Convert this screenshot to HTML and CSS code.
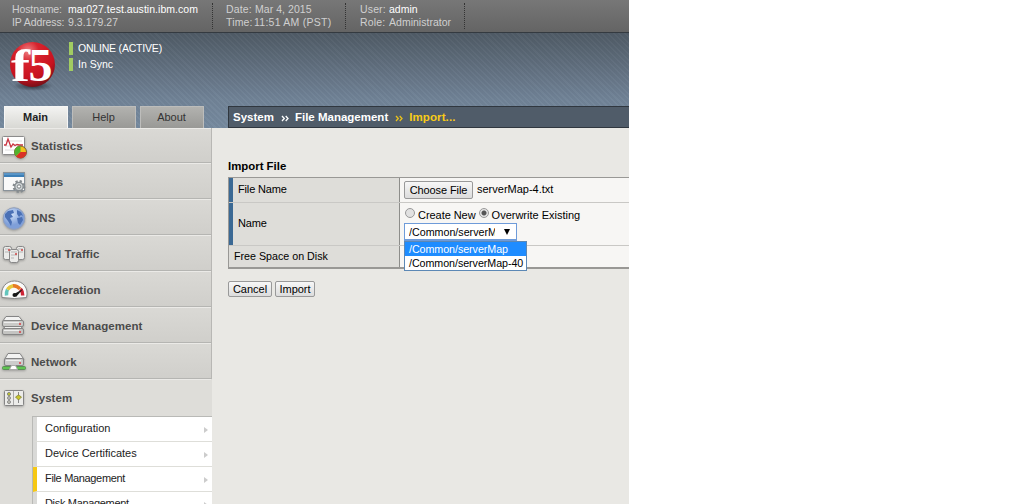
FILE: index.html
```html
<!DOCTYPE html>
<html lang="en">
<head>
<meta charset="utf-8">
<title>System - File Management - Import</title>
<link rel="stylesheet" href="styles.css">
</head>
<body>
<div class="app">
  <header class="status-bar">
    <dl class="info host"><dt>Hostname:</dt><dd class="bright hostname">mar027.test.austin.ibm.com</dd><dt class="ip">IP Address:</dt><dd class="ipval">9.3.179.27</dd></dl>
    <dl class="info date"><dt>Date:</dt><dd>Mar 4, 2015</dd><dt>Time:</dt><dd class="clock">11:51 AM (PST)</dd></dl>
    <dl class="info user"><dt>User:</dt><dd class="bright">admin</dd><dt>Role:</dt><dd>Administrator</dd></dl>
  </header>
  <div class="banner">
    <div class="brand">
      <svg class="logo" width="50" height="54" viewBox="0 0 50 54">
        <defs>
          <radialGradient id="ball" cx=".4" cy=".2" r=".8"><stop offset="0" stop-color="#ee8386"/><stop offset=".3" stop-color="#d8232d"/><stop offset=".75" stop-color="#c8121f"/><stop offset="1" stop-color="#7c1018"/></radialGradient>
          <radialGradient id="shade"><stop offset="0" stop-color="#252c34" stop-opacity=".9"/><stop offset="1" stop-color="#252c34" stop-opacity="0"/></radialGradient>
        </defs>
        <ellipse cx="25" cy="46" rx="20" ry="5" fill="url(#shade)"/>
        <circle cx="24.500" cy="24.500" r="22.500" fill="url(#ball)"/>
        <text class="logo-f" x="3" y="40.500" textLength="19" lengthAdjust="spacingAndGlyphs">f</text><text class="logo-5" x="20.500" y="40.500" textLength="24" lengthAdjust="spacingAndGlyphs">5</text>
      </svg>
      <div class="states"><p class="online">ONLINE (ACTIVE)</p><p class="sync">In Sync</p></div>
    </div>
    <div class="tab-row">
      <nav class="tabs"><a class="tab active">Main</a><a class="tab">Help</a><a class="tab">About</a></nav>
      <div class="crumbs"><b>System</b><svg class="chev" width="8" height="7" viewBox="0 0 8 7"><path d="M1 1l2.300 2.500L1 6M4.700 1L7 3.500 4.700 6"/></svg><b class="crumb-files">File Management</b><svg class="chev gold" width="8" height="7" viewBox="0 0 8 7"><path d="M1 1l2.300 2.500L1 6M4.700 1L7 3.500 4.700 6"/></svg><b class="current">Import...</b></div>
    </div>
  </div>
  <div class="body">
    <aside class="sidebar">
      <a class="item first"><svg class="icon" viewBox="0 0 28 28"><rect x="2.500" y="4.500" width="22" height="18" rx="1" fill="#fff" stroke="#8c8c8c"/><path d="M5 9h17M5 14h17M5 18h12" stroke="#ddd"/><path d="M4 13h2l2-6 3 8 2-3 2 1.500 2-1 2 .5h4" fill="none" stroke="#c93440" stroke-width="1.300"/><circle cx="20.500" cy="20" r="6" fill="#f2c319" stroke="#745c31"/><path d="M20.500 20v-6a6 6 0 0 0-4.500 10z" fill="#51b22e"/><path d="M20.500 20l-4.500 4.200a6 6 0 0 0 10.400-4.200z" fill="#d93127"/></svg>Statistics</a>
      <a class="item"><svg class="icon" viewBox="0 0 28 28"><rect x="3.500" y="4.500" width="21" height="18" fill="#f9f9f9" stroke="#89929a"/><path d="M4 5h20v4H4z" fill="#3c7fb7"/><path d="M4 6h20" stroke="#76acd6"/><circle cx="19" cy="18.500" r="5.200" fill="none" stroke="#858b8f" stroke-width="2.500" stroke-dasharray="2.200 1.884"/><circle cx="19" cy="18.500" r="4.200" fill="#cdd2d4" stroke="#858b8f" stroke-width="1.300"/><circle cx="19" cy="18.500" r="1.700" fill="#fff" stroke="#797f82"/></svg>iApps</a>
      <a class="item"><svg class="icon" viewBox="0 0 28 28"><defs><radialGradient id="globe" cx=".4" cy=".3"><stop stop-color="#cfe0f8"/><stop offset="1" stop-color="#7f9fd8"/></radialGradient></defs><circle cx="14" cy="14.500" r="10.800" fill="url(#globe)" stroke="#93a0ba"/><path d="M5 10l3-3 5-1 1 3-3 1 2 3-3 1 2 4-1 4-3-5-3-4zM17 6l4 2 2 4-2-1-2 2-2-3zM17 14l5-1 1 3-3 5-2-2z" fill="#4a70b5"/></svg>DNS</a>
      <a class="item"><svg class="icon" viewBox="0 0 28 28"><g fill="#ebebe9" stroke="#888"><rect x="3.500" y="6.500" width="8" height="13" rx="2"/><rect x="16.500" y="6.500" width="8" height="13" rx="2"/><rect x="9.500" y="9.500" width="9" height="13" rx="2"/></g><path d="M5 9h5M5 12h4M18 9h5M19 12h4M11 12h6M11 15h6M11 18h3" stroke="#b5b5b5"/><path d="M8 10h2M15 14h2M21 10h2" stroke="#ce4343" stroke-width="1.300"/></svg>Local Traffic</a>
      <a class="item"><svg class="icon" viewBox="0 0 28 28"><path d="M2 21.500C0 12 6 5 14.500 5S29 12 26.500 21.500q-12 2-24.500 0z" fill="#fafafa" stroke="#858585"/><path d="M6.500 19.500q-.4-3.500 1-6" fill="none" stroke="#62c5bd" stroke-width="3.500"/><path d="M7.500 13.500q2-3 6-3.800" fill="none" stroke="#e6c73b" stroke-width="3.500"/><path d="M13 9.700q4-.3 7 3.300" fill="none" stroke="#e77a25" stroke-width="3.500"/><path d="M20.500 13q2.200 2.500 2.200 6.500" fill="none" stroke="#cd2335" stroke-width="3.500"/><path d="M14 18l9-5-7 8z" fill="#171717"/><circle cx="14.500" cy="19" r="2" fill="#171717"/></svg>Acceleration</a>
      <a class="item"><svg class="icon" viewBox="0 0 28 28"><g stroke="#858585"><path d="M6 4.500h13l4 5H2.500z" fill="#f3f3f2"/><rect x="2.500" y="8.500" width="21" height="6" rx="1.500" fill="#cacac8"/><path d="M5 14.500h16l2 3h-20z" fill="#efefee"/><rect x="2.500" y="16.500" width="21" height="6" rx="1.500" fill="#c4c4c2"/></g><path d="M4 10.500h15M4 18.500h15" stroke="#eee"/><path d="M19 12h2M19 20h2" stroke="#d83e43" stroke-width="1.500"/></svg>Device Management</a>
      <a class="item"><svg class="icon" viewBox="0 0 28 28"><path d="M8 5.500h12l4 6H4.500z" fill="#f3f3f2" stroke="#858585"/><rect x="4.500" y="10.500" width="19" height="7" rx="1.500" fill="#ccc" stroke="#858585"/><path d="M6 12.500h15" stroke="#eee"/><path d="M19 15h2" stroke="#e03c46" stroke-width="1.500"/><rect x="2.500" y="18.500" width="23" height="3" rx="1" fill="#60c452" stroke="#5a8f56"/><path d="M11.500 17.500h4l2 4h-8z" fill="#fff" stroke="#aaa"/></svg>Network</a>
      <a class="item open"><svg class="icon" viewBox="0 0 28 28"><rect x="4.500" y="6.500" width="19" height="15" rx="1" fill="#ececea" stroke="#858585"/><path d="M13.500 7v14" stroke="#aaa"/><g fill="#c5c5ba" stroke="#777" stroke-width=".8"><circle cx="9" cy="10" r="1.600" fill="#bdc32d"/><circle cx="9" cy="14" r="1.500"/><circle cx="9" cy="18" r="1.500"/></g><path d="M18.500 8v11" stroke="#888"/><path d="M15.500 13l3-2 3 2-3 3z" fill="#c9c62c" stroke="#76742c" stroke-width=".7"/></svg>System</a>
      <nav class="submenu"><a>Configuration<i></i></a><a>Device Certificates<i></i></a><a class="selected"><span class="tight">File Management</span><i></i></a><a><span class="tight">Disk Management</span><i></i></a></nav>
    </aside>
    <main class="content">
      <h1>Import File</h1>
      <div class="form">
        <div class="row file required"><div class="label">File Name</div><div class="field"><button class="choose">Choose File</button><span class="filename">serverMap-4.txt</span></div></div>
        <div class="row name required"><div class="label">Name</div><div class="field stack">
          <div class="radios"><span class="radio"></span><span class="create">Create New</span><span class="radio on"></span><span>Overwrite Existing</span></div>
          <div class="select"><span class="value">/Common/serverMap</span><span class="arrow"></span>
            <div class="options"><div class="option hot">/Common/serverMap</div><div class="option">/Common/serverMap-40</div></div>
          </div></div></div>
        <div class="row space"><div class="label">Free Space on Disk</div><div class="field"></div></div>
      </div>
      <div class="actions"><button class="cancel">Cancel</button><button class="import">Import</button></div>
    </main>
  </div>
</div>
</body>
</html>
```
FILE: styles.css
```css
* { box-sizing: border-box; }
body { margin: 0; background: #fff; color: #000; font: 11px/14px "Liberation Sans", Arial, sans-serif; }
p, h1, dl, dd { margin: 0; }
.app { width: 629px; height: 504px; overflow: hidden; display: flex; flex-direction: column; background: #e9e8e4; }

.status-bar { flex: none; height: 33px; display: flex; padding-top: 3px; background: linear-gradient(#777, #646464); border-bottom: 1px solid #343a40; color: #d0d0d0; }
.info { height: 26px; display: grid; grid-template-rows: 13px 13px; line-height: 13px; font-size: 10.5px; letter-spacing: .15px; white-space: nowrap; border-right: 1px dotted #333; }
.host { width: 213px; padding-left: 12px; grid-template-columns: 56px 1fr; }
.host dt { letter-spacing: -.1px; }
.host .hostname { letter-spacing: .04px; }
.host .ipval { letter-spacing: .05px; }
.date { width: 133px; padding-left: 13px; grid-template-columns: 29px 1fr; }
.date dd { letter-spacing: .05px; }
.date .clock { margin-left: -1px; letter-spacing: .25px; }
.user { width: 119px; padding-left: 14px; grid-template-columns: 29px 1fr; }
.user dd { letter-spacing: .02px; }
.bright { color: #fff; }

.banner { flex: none; height: 95px; display: flex; flex-direction: column; justify-content: space-between; background: repeating-linear-gradient(45deg, rgba(255,255,255,.025) 0 1.500px, rgba(0,0,0,.025) 1.500px 4px), linear-gradient(#505b66, #718397 70%, #768a9f); }
.brand { display: flex; padding: 7px 0 0 8px; }
.logo { flex: none; }
.logo text { fill: #fff; font-family: "Liberation Serif", serif; font-weight: bold; }
.logo-f { font-size: 46px; }
.logo-5 { font-size: 46px; }
.states { margin: 2px 0 0 11px; color: #fff; font-size: 10.500px; }
.states p { border-left: 4px solid #a1cc62; padding-left: 5px; height: 13px; line-height: 13px; margin-bottom: 3px; }
.states .online { letter-spacing: -.2px; }
.tab-row { height: 22px; display: flex; align-items: stretch; }
.tabs { width: 228px; display: flex; gap: 4px; padding-left: 4px; }
.tab { width: 64px; padding-right: 1px; text-align: center; line-height: 21px; color: #333; background: linear-gradient(#b2b2af, #999996); border: solid #bdbdbb; border-width: 1px 1px 0; }
.tab.active { background: linear-gradient(#f3f3f1, #d8d8d4); border-color: #f6f6f5; color: #222; font-weight: bold; }
.crumbs { flex: 1; display: flex; align-items: center; padding-left: 4px; border: 1px solid #30373f; border-right: 0; background: #505c69; color: #fff; font-size: 11.500px; }
.crumbs .chev { margin: 2px 6px 0 7px; fill: none; stroke: #fff; stroke-width: 1.300; }
.crumbs .gold { stroke: #eac21c; }
.crumbs .current { color: #f8cb17; letter-spacing: .1px; }

.body { flex: 1; min-height: 0; display: flex; }
.sidebar { width: 212px; height: 376px; overflow: hidden; background: #deddd9; }
.item { height: 36px; display: flex; align-items: center; padding-top: 3px; font-size: 11.500px; font-weight: bold; letter-spacing: .05px; color: #4b4b4b; background: linear-gradient(#dad9d5, #d0cfcb); border-right: 1px solid #b8b7b4; border-bottom: 1px solid #b5b5b2; box-shadow: inset 0 1px #ebeae7; }
.item.first { height: 35px; padding-top: 2px; }
.item.open { height: 37px; padding-top: 1px; background: #deddd9; border-color: transparent; }
.icon { width: 28px; height: 28px; margin-right: 3px; filter: drop-shadow(0 1px 1px rgba(0,0,0,.25)); }
.submenu { margin-left: 32px; border: solid #b9b9b6; border-width: 1px 0 0 1px; }
.submenu a { height: 25px; display: flex; align-items: center; justify-content: space-between; padding: 0 4px 2px 8px; border-left: 4px solid #d9d9d7; border-bottom: 1px solid #deded9; background: #fff; color: #222; }
.submenu .tight { letter-spacing: -.33px; }
.submenu .selected { border-left-color: #f6c814; }
.submenu i { border: solid transparent; border-width: 3px 0 3px 4px; border-left-color: #ccc; margin-top: 3px; }

.content { width: 417px; padding: 31px 0 0 16px; }
h1 { font-size: 11.400px; line-height: 14px; height: 18px; }
.form { border: solid #999895; border-width: 1px 0 2px 1px; height: 92px; }
.row { display: flex; border-bottom: 1px solid #c9c8c5; }
.row.space { border-bottom: 0; }
.file { height: 25px; }
.name { height: 43px; }
.space { height: 21px; }
.label { width: 171px; display: flex; align-items: center; padding: 0 0 2px 5px; background: #deddd9; border-right: 1px solid #8d8d8a; letter-spacing: -.15px; }
.space .label { letter-spacing: 0; font-size: 10.700px; }
.required .label { border-left: 4px solid #3b6994; }
.field { flex: 1; display: flex; align-items: center; padding-left: 4px; background: #f7f6f4; }
.filename { padding-bottom: 2px; }
button { height: 16px; padding: 0; font: inherit; line-height: 13px; color: #000; border: 1px solid #999; border-radius: 2px; background: linear-gradient(#f7f7f7, #dcdcdc); }
.choose { width: 69px; height: 18px; margin-right: 4px; letter-spacing: -.1px; }
.stack { display: block; }
.radios { height: 15px; margin-top: 4px; display: flex; align-items: center; }
.radio { width: 10px; height: 10px; border: 1px solid #999; border-radius: 50%; background: #e1e1e1; margin: -4px 3px 0 1px; }
.create { margin-right: 3px; letter-spacing: -.05px; }
.radio.on { margin-left: 0; background: radial-gradient(circle, #555 0 2px, #e4e4e4 3px); }
.select { position: relative; width: 113px; height: 18px; margin-top: 1px; display: flex; align-items: center; padding-left: 4px; border: 2px solid #6e9bd9; border-width: 1px 1px 2px 1px; background: #fff; font-size: 10.700px; }
.value { width: 86px; overflow: hidden; }
.arrow { border: solid transparent; border-width: 6px 3px 0; border-top-color: #000; margin-left: 9px; }
.options { position: absolute; z-index: 1; left: -1px; top: 17px; width: 123px; border: 1px solid #5c88b5; background: #fff; letter-spacing: -.05px; }
.option { height: 14px; line-height: 14px; padding-left: 4px; white-space: nowrap; }
.option.hot { background: #1e8cff; color: #fff; }
.actions { display: flex; gap: 3px; margin-top: 12px; }
.cancel { width: 44px; }
.import { width: 40px; }
```
